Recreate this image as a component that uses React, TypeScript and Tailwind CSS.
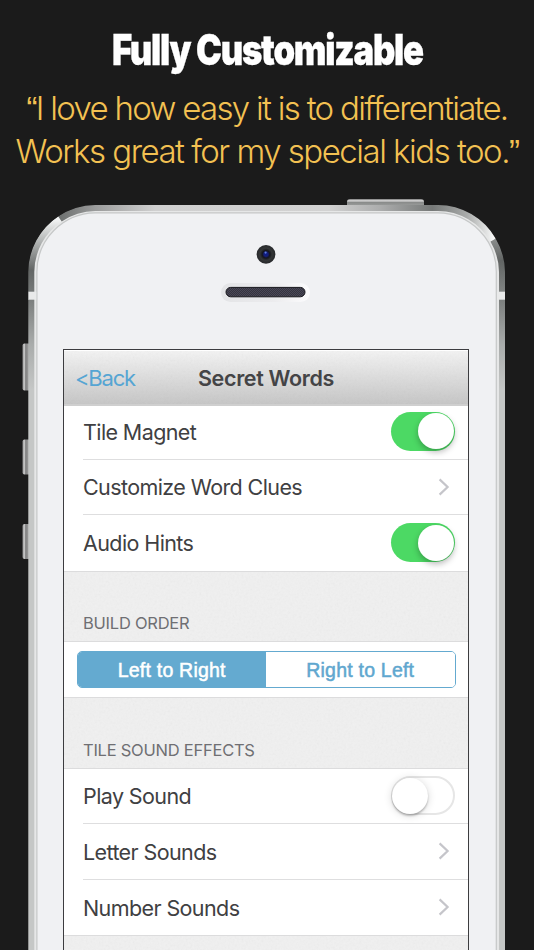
import { useState, type ReactNode } from 'react';
import clsx from 'clsx';

type Order = 'ltr' | 'rtl';

function PhoneShell() {
  return (
    <svg className="absolute inset-0 pointer-events-none" width="534" height="950" viewBox="0 0 534 950" fill="none">
      <defs>
        <linearGradient id="key" x1="0" y1="0" x2="1" y2="0">
          <stop offset="0" stopColor="#8a8a8a" />
          <stop offset="0.22" stopColor="#d0d0d0" />
          <stop offset="0.4" stopColor="#7f7f7f" />
          <stop offset="1" stopColor="#b4b4b4" />
        </linearGradient>
        <linearGradient id="power" x1="0" y1="199" x2="0" y2="206" gradientUnits="userSpaceOnUse">
          <stop offset="0" stopColor="#777" />
          <stop offset="0.25" stopColor="#d8d8d8" />
          <stop offset="0.5" stopColor="#8a8c8b" />
          <stop offset="1" stopColor="#9c9e9d" />
        </linearGradient>
        <linearGradient id="top" x1="60" y1="0" x2="493" y2="0" gradientUnits="userSpaceOnUse">
          <stop offset="0" stopColor="#6f7271" />
          <stop offset="0.08" stopColor="#9a9b9b" />
          <stop offset="0.22" stopColor="#d0d0d0" />
          <stop offset="0.62" stopColor="#d2d2d2" />
          <stop offset="0.74" stopColor="#acadad" />
          <stop offset="0.86" stopColor="#767978" />
          <stop offset="0.94" stopColor="#a9abaa" />
          <stop offset="1" stopColor="#f4f5f5" />
        </linearGradient>
        <linearGradient id="leftCorner" x1="0" y1="219" x2="0" y2="292" gradientUnits="userSpaceOnUse">
          <stop offset="0" stopColor="#f4f5f5" />
          <stop offset="0.35" stopColor="#a9acab" />
          <stop offset="0.7" stopColor="#636665" />
          <stop offset="1" stopColor="#757877" />
        </linearGradient>
        <linearGradient id="rightCorner" x1="0" y1="240" x2="0" y2="292" gradientUnits="userSpaceOnUse">
          <stop offset="0" stopColor="#888b8a" />
          <stop offset="0.4" stopColor="#626564" />
          <stop offset="1" stopColor="#818483" />
        </linearGradient>
        <linearGradient id="side" x1="0" y1="299" x2="0" y2="390" gradientUnits="userSpaceOnUse">
          <stop offset="0" stopColor="#7b7e7d" />
          <stop offset="0.5" stopColor="#a9acab" />
          <stop offset="1" stopColor="#c5c7c6" />
        </linearGradient>
        <radialGradient id="lens">
          <stop offset="0" stopColor="#0a1c8c" />
          <stop offset="0.22" stopColor="#151d78" />
          <stop offset="0.4" stopColor="#15161c" />
          <stop offset="0.65" stopColor="#343637" />
          <stop offset="1" stopColor="#26282a" />
        </radialGradient>
        <linearGradient id="speakerRim" x1="0" y1="0" x2="1" y2="0">
          <stop offset="0" stopColor="#e3e4e6" />
          <stop offset="0.6" stopColor="#ececee" />
          <stop offset="1" stopColor="#fcfcfd" />
        </linearGradient>
        <pattern id="mesh" width="2" height="2" patternUnits="userSpaceOnUse">
          <rect width="2" height="2" fill="#35343f" />
          <rect width="1" height="1" fill="#4a4857" />
          <rect x="1" y="1" width="1" height="1" fill="#4a4857" />
        </pattern>
      </defs>

      {/* hardware keys */}
      <rect x="22.5" y="343.5" width="8" height="47" rx="2" fill="url(#key)" />
      <rect x="22.5" y="439.5" width="8" height="35" rx="2" fill="url(#key)" />
      <rect x="22.5" y="524" width="8" height="35" rx="2" fill="url(#key)" />
      <path d="M347 206V202Q347 199 350 199H421Q424 199 424 202V206Z" fill="url(#power)" />

      {/* body */}
      <path d="M29 960V272A66 66 0 0 1 95 206H438A66 66 0 0 1 504 272V960Z" fill="#e6e7e7" />
      <path d="M36.9 960V272A59 59 0 0 1 95 212.9H438A59 59 0 0 1 496.3 272V960Z" fill="#f0f1f3" stroke="#c6c8c8" strokeWidth="1.2" />

      {/* metal rim */}
      <g strokeWidth="6">
        <path d="M60 219A64 64 0 0 0 31.3 272V292" stroke="url(#leftCorner)" />
        <path d="M493 240A64 64 0 0 1 502 272V292" stroke="url(#rightCorner)" />
        <path d="M60 219A64 64 0 0 1 95.3 208H438A64 64 0 0 1 493 240" stroke="url(#top)" />
      </g>
      <rect x="28.3" y="299" width="6" height="651" fill="url(#side)" />
      <rect x="499" y="299" width="6" height="651" fill="url(#side)" />
      <rect x="28.3" y="291.7" width="8" height="8" fill="#e9eaea" />
      <rect x="497" y="291.7" width="8" height="8" fill="#e9eaea" />

      {/* camera */}
      <circle cx="266" cy="254.3" r="9.4" fill="url(#lens)" />
      <circle cx="265.6" cy="252.6" r="1.1" fill="#5d7de0" />

      {/* speaker */}
      <rect x="221" y="283" width="89" height="19" rx="9.5" fill="url(#speakerRim)" />
      <rect x="226" y="287.4" width="79" height="9.4" rx="4.7" fill="url(#mesh)" stroke="#17171c" strokeWidth="1" />
    </svg>
  );
}

function Grain() {
  return (
    <svg className="absolute inset-0 w-full h-full opacity-[0.08] pointer-events-none">
      <filter id="grain">
        <feTurbulence type="fractalNoise" baseFrequency="0.45" numOctaves="2" />
        <feColorMatrix type="saturate" values="0" />
      </filter>
      <rect width="100%" height="100%" filter="url(#grain)" />
    </svg>
  );
}

function Toggle({ on, onChange }: { on: boolean; onChange: () => void }) {
  return (
    <button
      onClick={onChange}
      className={clsx(
        'flex items-center w-16 h-[39px] rounded-full',
        on ? 'bg-[#4cd964] justify-end pr-[1.5px]' : 'bg-white border-2 border-[#e6e6e6] justify-start'
      )}
    >
      <span
        className={clsx(
          'w-9 h-9 rounded-full bg-white',
          on
            ? 'shadow-[0_3px_6px_rgba(0,0,0,0.28)]'
            : '-ml-px shadow-[0_2px_2px_rgba(0,0,0,0.22),0_1px_9px_rgba(0,0,0,0.16)]'
        )}
      />
    </button>
  );
}

function Chevron() {
  return (
    <svg className="mr-[5px]" width="12" height="18" viewBox="0 0 12 18" fill="none" stroke="#c5c5ca" strokeWidth="2.2">
      <path d="M1.6 1.4L9.6 9L1.6 16.6" />
    </svg>
  );
}

function Row({ label, last, children }: { label: string; last?: boolean; children: ReactNode }) {
  return (
    <div
      className={clsx(
        'ml-[19px] pr-[13px] h-[55.5px] flex items-center justify-between',
        !last && 'border-b border-[#dededf]'
      )}
    >
      <span className="pt-[2px] text-[21.5px] leading-none tracking-[-0.6px] text-[#404042] whitespace-nowrap">{label}</span>
      {children}
    </div>
  );
}

function SectionHeader({ title }: { title: string }) {
  return (
    <div className="relative h-[71.5px] bg-[#f0f0f0] border-y border-[#dcdcdd] flex items-end pl-[19px] pb-[8px]">
      <Grain />
      <h2 className="relative text-[16.5px] leading-[20px] tracking-[-0.24px] text-[#6f6f73]">{title}</h2>
    </div>
  );
}

export default function App() {
  const [magnet, setMagnet] = useState(true);
  const [hints, setHints] = useState(true);
  const [sound, setSound] = useState(false);
  const [order, setOrder] = useState<Order>('ltr');

  const segment = (value: Order) =>
    clsx(
      'flex-1 flex items-center justify-center pt-[2px]',
      order === value ? 'bg-[#64aad0] text-white' : 'bg-white text-[#5fa7cf]'
    );

  return (
    <div className="relative w-[534px] h-[950px] overflow-hidden bg-[#1b1b1b] font-['Inter',sans-serif]">
      <PhoneShell />

      <header className="relative h-[349px] pt-[25px] flex flex-col items-center whitespace-nowrap">
        <h1 className="text-[42px] leading-[50px] font-black tracking-[-1.5px] text-white scale-x-[0.825] [-webkit-text-stroke:0.3px_white]">
          Fully Customizable
        </h1>
        <p className="mt-[12px] text-[33px] leading-[42px] font-light text-center text-[#f3c152]">
          <span className="block tracking-[-1.7px]">
            <span className="font-['Liberation_Sans',sans-serif]">“</span>I love how easy it is to differentiate.
          </span>
          <span className="block tracking-[-1.5px]">
            Works great for my special kids too.<span className="font-['Liberation_Sans',sans-serif]">”</span>
          </span>
        </p>
      </header>

      <main className="relative ml-[63px] w-[406px] h-[610px] border border-[#3c3c3f] bg-white">
        <nav className="relative h-[56px] flex items-center px-[11px] pt-[2px] bg-linear-to-b from-[#f3f3f3] to-[#c6c6c6] border-t border-t-white border-b-2 border-b-[#cfcfcf]">
          <Grain />
          <button className="relative flex-1 text-left text-[22px] tracking-[-1.2px] text-[#56a5d3]">&lt;Back</button>
          <h2 className="relative text-[21.5px] font-semibold tracking-[-0.35px] text-[#444446]">Secret Words</h2>
          <span className="flex-1" />
        </nav>

        <div className="-mt-[2px]">
          <Row label="Tile Magnet">
            <Toggle on={magnet} onChange={() => setMagnet(!magnet)} />
          </Row>
          <Row label="Customize Word Clues">
            <Chevron />
          </Row>
          <Row label="Audio Hints" last>
            <Toggle on={hints} onChange={() => setHints(!hints)} />
          </Row>
        </div>

        <SectionHeader title="BUILD ORDER" />
        <div className="h-[55px] flex items-center pl-[12.5px] pr-[12.5px]">
          <div className="flex w-full h-[36.5px] rounded-[5px] overflow-hidden border-[1.5px] border-[#64aad0] text-[19.5px] tracking-[0.22px] font-['Liberation_Sans',sans-serif] [-webkit-text-stroke:0.5px_currentColor]">
            <button className={segment('ltr')} onClick={() => setOrder('ltr')}>
              Left to Right
            </button>
            <button className={segment('rtl')} onClick={() => setOrder('rtl')}>
              Right to Left
            </button>
          </div>
        </div>

        <SectionHeader title="TILE SOUND EFFECTS" />
        <Row label="Play Sound">
          <Toggle on={sound} onChange={() => setSound(!sound)} />
        </Row>
        <Row label="Letter Sounds">
          <Chevron />
        </Row>
        <Row label="Number Sounds" last>
          <Chevron />
        </Row>
        <div className="relative h-[30px] bg-[#f0f0f0] border-t border-[#dcdcdd]">
          <Grain />
        </div>
      </main>
    </div>
  );
}
